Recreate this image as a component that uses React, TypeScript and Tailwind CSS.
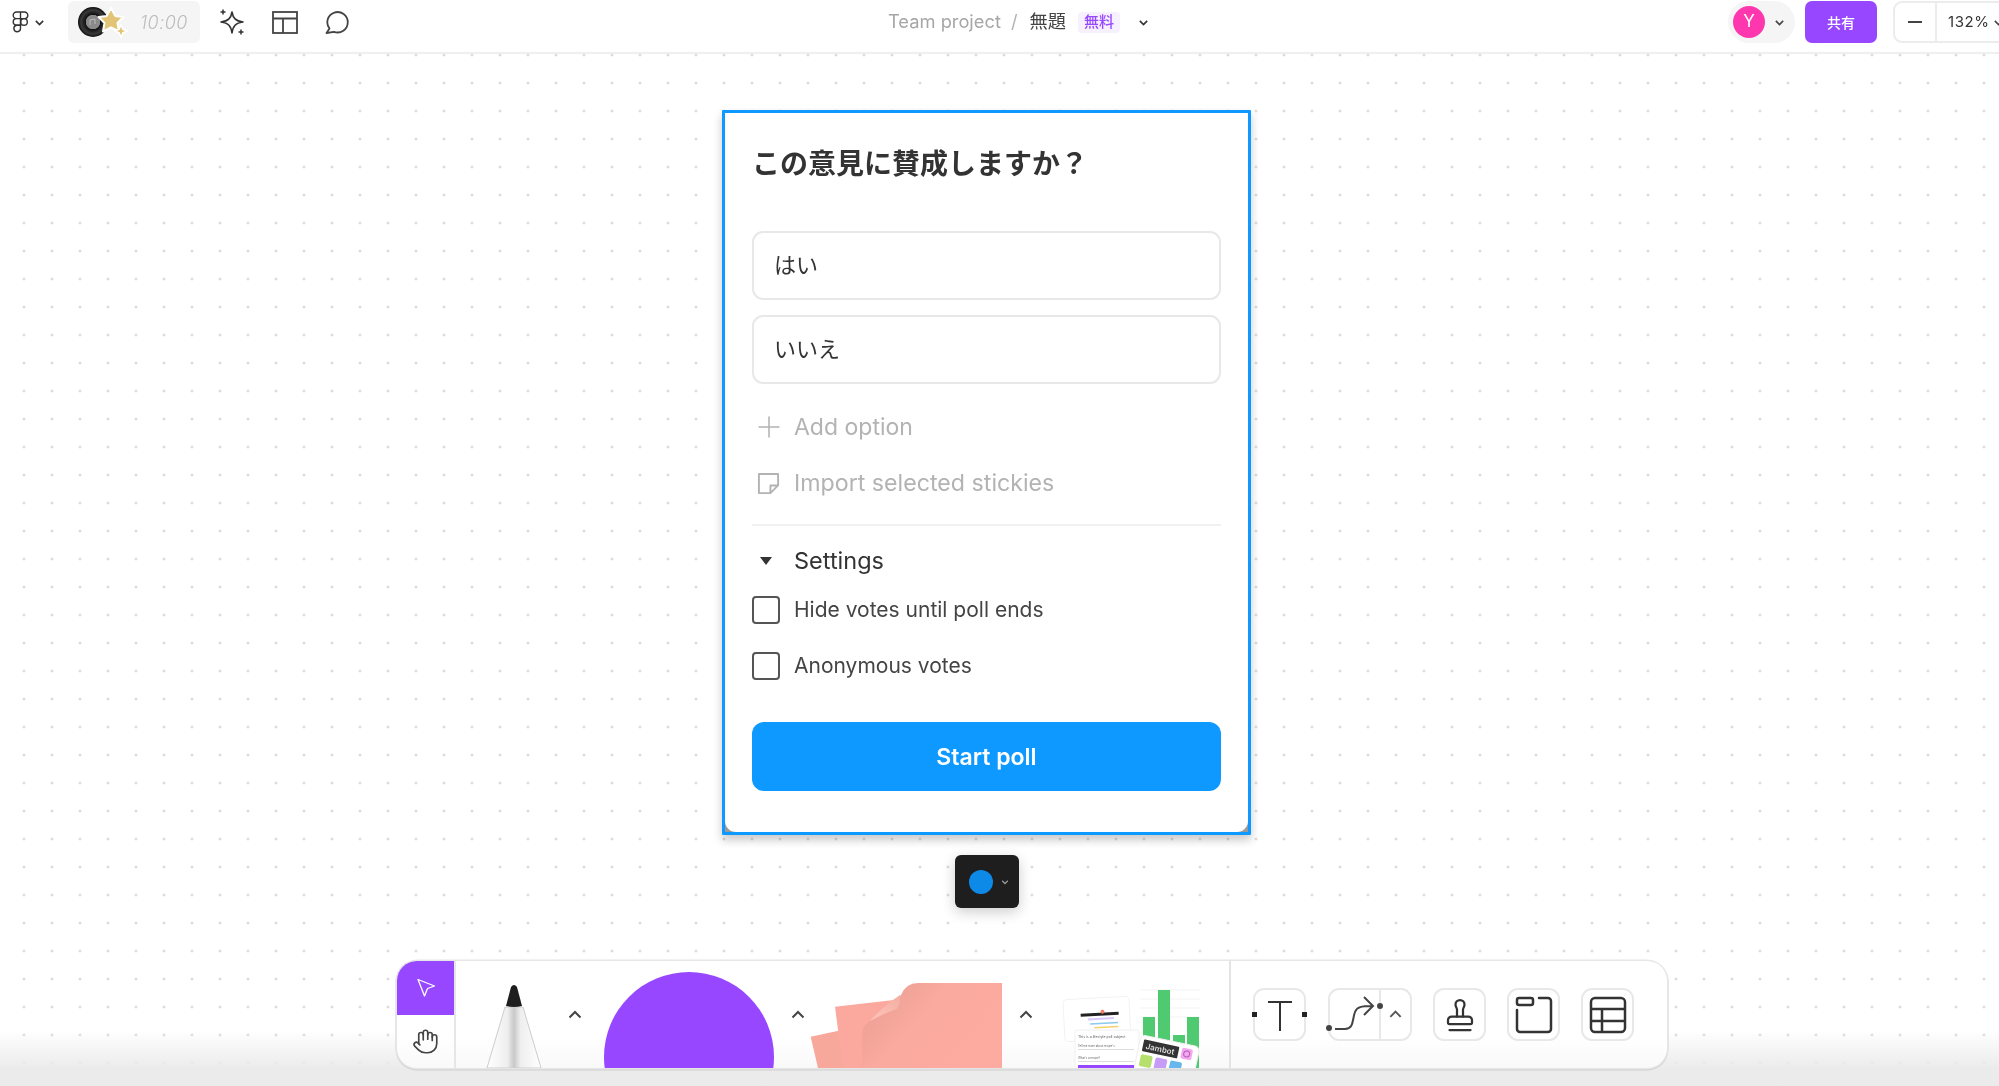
import { Hand, Plus, Stamp } from "lucide-react"

const FONT = "font-['Inter','Noto_Sans_CJK_JP',sans-serif]"

function Chevron({ up, className = "" }: { up?: boolean; className?: string }) {
  return (
    <svg viewBox="0 0 16 16" className={`fill-none stroke-current stroke-2 ${className}`}>
      <path d={up ? "M2.5 10.5 8 5l5.5 5.5" : "M3.5 6 8 10.5 12.5 6"} />
    </svg>
  )
}

function FigmaLogo() {
  return (
    <svg viewBox="0 0 17 22" className="h-[22px] w-[17px] fill-none stroke-[#333] stroke-[1.4]">
      <path d="M4.5 1h4v6.6h-4a3.3 3.3 0 0 1 0-6.6ZM8.5 1h4a3.3 3.3 0 0 1 0 6.6h-4ZM4.5 7.6h4v6.6h-4a3.3 3.3 0 0 1 0-6.6Z" />
      <circle cx="12" cy="10.9" r="3.3" />
      <path d="M4.5 14.2h4v3.3a3.3 3.3 0 1 1-4-3.3Z" />
    </svg>
  )
}

function TimerArt() {
  return (
    <svg viewBox="0 0 52 36" className="h-9 w-[52px]">
      <defs>
        <radialGradient id="disc">
          <stop offset="0.46" stopColor="#8a8a8a" />
          <stop offset="0.5" stopColor="#111" />
          <stop offset="0.8" stopColor="#3a3a3a" />
          <stop offset="1" stopColor="#0c0c0c" />
        </radialGradient>
      </defs>
      <circle cx="15" cy="18" r="15" fill="url(#disc)" />
      <path d="M12 21v-5l5-1v5" fill="none" stroke="#bbb" strokeWidth="1" />
      <path
        d="M33 4 37.200 11.900 45.400 13 39.500 19 41 27.500 33 23.500 25 27.500 26.500 19 20.600 13 28.800 11.900Z"
        fill="#e3c477"
        stroke="#fff"
        strokeWidth="2"
        strokeLinejoin="round"
      />
      <path d="M43 20.500l1.800 4.700 4.700 1.800-4.700 1.800-1.800 4.700-1.800-4.700-4.700-1.800 4.700-1.800Z" fill="#e3c477" stroke="#fff" strokeWidth="1.500" strokeLinejoin="round" />
    </svg>
  )
}

function Sparkles() {
  return (
    <svg viewBox="0 0 28 28" className="h-7 w-7 fill-none stroke-[#333] stroke-[1.6]">
      <path d="M14 4c1 6 3.5 9 11 10-7.500 1-10 4-11 11-1-7-3.500-10-11-11 7.500-1 10-4 11-10Z" strokeLinejoin="round" />
      <path d="M5 1.500v5M2.500 4h5M23 21.500v5M20.500 24h5" strokeWidth="1.500" />
    </svg>
  )
}

function LayoutIcon() {
  return (
    <svg viewBox="0 0 26 23" className="h-[23px] w-[26px] fill-none stroke-[#444] stroke-[1.8]">
      <rect x="1" y="1" width="24" height="21" />
      <path d="M1 7.500h24M11 7.500V22" />
    </svg>
  )
}

function CommentIcon() {
  return (
    <svg viewBox="0 0 25 23" className="h-[23px] w-[25px] fill-none stroke-[#444] stroke-[1.8]">
      <path d="M4.500 17.500A10.200 10.200 0 1 1 9 20.800L1.500 22Z" strokeLinejoin="round" />
    </svg>
  )
}

function TopBar() {
  return (
    <header className="flex h-[54px] shrink-0 items-center border-b-2 border-[#efefef] bg-white pb-[8px]">
      <div className="ml-3 flex items-center">
        <FigmaLogo />
        <Chevron className="ml-[4px] h-[13px] w-[13px] text-[#333]" />
      </div>
      <div className="ml-[22px] flex h-[42px] w-[132px] items-center rounded-[6px] bg-[#f5f5f5] pl-[10px]">
        <TimerArt />
        <span className="ml-[10px] text-[18px] font-light tracking-[0.5px] text-[#bdbdbd] italic">10:00</span>
      </div>
      <div className="ml-[18px] flex items-center">
        <Sparkles />
        <div className="ml-[26px]">
          <LayoutIcon />
        </div>
        <div className="ml-[27px]">
          <CommentIcon />
        </div>
      </div>
      <div className="ml-[538px] flex items-center text-[18.300px]">
        <span className="text-[#a6a6a6]">Team project</span>
        <span className="ml-[10px] text-[#b3b3b3]">/</span>
        <span className="ml-[12px] text-[#444]">無題</span>
        <span className="ml-[12px] flex h-[21px] w-[42px] items-center justify-center rounded-[4px] bg-[#f6f0ff] text-[15px] font-medium text-[#9747ff]">
          無料
        </span>
        <Chevron className="ml-[17px] h-[13px] w-[13px] text-[#333]" />
      </div>
      <div className="ml-[578px] flex h-[42px] w-[67px] items-center rounded-full bg-[#f5f5f5] pl-[5px]">
        <span className="flex size-8 items-center justify-center rounded-full bg-[#ff37ae] text-[17px] text-white">Y</span>
        <Chevron className="ml-[8px] h-[13px] w-[13px] text-[#444]" />
      </div>
      <button className="ml-[10px] h-[42px] w-[72px] rounded-[7px] bg-[#9747ff] text-[14px] font-medium text-white">
        共有
      </button>
      <div className="ml-[16px] flex h-[42px] flex-1 items-center overflow-hidden rounded-l-[9px] border-y-2 border-l-2 border-[#ececec]">
        <div className="flex h-full w-[42px] shrink-0 items-center justify-center border-r-2 border-[#ececec]">
          <span className="h-[2px] w-[14px] bg-[#444]" />
        </div>
        <span className="ml-[11px] shrink-0 text-[15px] tracking-[0.6px] text-[#333]">132%</span>
        <Chevron className="ml-[2px] h-[13px] w-[13px] shrink-0 text-[#444]" />
      </div>
    </header>
  )
}

function OptionInput({ label }: { label: string }) {
  return (
    <div className="flex h-[69px] items-center rounded-[11px] border-2 border-[#e8e8e8] pl-[20px] text-[22px] text-[#333]">
      {label}
    </div>
  )
}

function Check({ label, className = "" }: { label: string; className?: string }) {
  return (
    <div className={`flex h-7 items-center ${className}`}>
      <span className="size-7 rounded-[4px] border-2 border-[#555]" />
      <span className="ml-[14px] text-[21px] text-[#444]">{label}</span>
    </div>
  )
}

function PollCard() {
  return (
    <section className="ml-[722px] h-[725px] w-[529px] rounded-[1px] border-[3px] border-[#0d99ff] bg-gradient-to-b from-white via-white to-[#999] shadow-[0_5px_10px_rgba(0,0,0,0.22)]">
      <div className="h-full rounded-[11px] bg-white px-[27px]">
        <h1 className="pt-[33px] pb-[49px] text-[28px] leading-[36px] font-bold text-[#333]">この意見に賛成しますか？</h1>
        <div className="flex flex-col gap-[15px]">
          <OptionInput label="はい" />
          <OptionInput label="いいえ" />
        </div>
        <div className="mt-[26px] flex h-[34px] items-center text-[23px] text-[#b3b3b3]">
          <Plus className="size-[34px]" strokeWidth={1.100} />
          <span className="ml-[8px]">Add option</span>
        </div>
        <div className="mt-[22px] flex h-[34px] items-center text-[23.200px] text-[#b3b3b3]">
          <svg viewBox="0 0 24 24" className="ml-[5px] size-[23px] fill-none stroke-current stroke-2">
            <path d="M2 2h20v12l-8 8H2ZM22 14h-8v8" strokeLinejoin="round" />
          </svg>
          <span className="ml-[14px]">Import selected stickies</span>
        </div>
        <div className="mt-[24px] h-[2px] bg-[#f1f1f1]" />
        <div className="mt-[18px] flex h-[34px] items-center text-[23.500px] text-[#333]">
          <span className="ml-2 h-0 w-0 border-x-[6px] border-t-[8px] border-x-transparent border-t-[#333]" />
          <span className="ml-[22px]">Settings</span>
        </div>
        <Check label="Hide votes until poll ends" className="mt-[18px]" />
        <Check label="Anonymous votes" className="mt-[28px]" />
        <button className="mt-[42px] h-[69px] w-full rounded-[12px] bg-[#0d99ff] pt-[2px] text-[23px] font-semibold text-white">
          Start poll
        </button>
      </div>
    </section>
  )
}

function ColorSwatch() {
  return (
    <div className="mt-[20px] ml-[955px] flex h-[53px] w-[64px] items-center rounded-[6px] bg-[#1e1e1e] pl-[14px] shadow-[0_4px_14px_rgba(0,0,0,0.2)]">
      <span className="size-6 rounded-full bg-[#0d8ae8]" />
      <Chevron className="ml-[7px] h-[10px] w-[10px] text-[#999]" />
    </div>
  )
}

function Pen() {
  return (
    <svg viewBox="0 0 62 88" className="h-[88px] w-[62px] self-end">
      <defs>
        <linearGradient id="barrel" x1="0" x2="1" y1="0" y2="0">
          <stop offset="0" stopColor="#fff" />
          <stop offset="0.38" stopColor="#eee" />
          <stop offset="0.5" stopColor="#c8c8c8" />
          <stop offset="0.62" stopColor="#eee" />
          <stop offset="1" stopColor="#fff" />
        </linearGradient>
      </defs>
      <path d="M4 88 22 27h18l18 61Z" fill="url(#barrel)" stroke="#ccc" strokeWidth="1" />
      <path d="M23 26 28 7q3-4 6 0l5 19q-8 2-16 0Z" fill="#1e1e1e" />
    </svg>
  )
}

function Stickies() {
  return (
    <svg viewBox="0 0 192 85" className="h-[85px] w-[192px] self-end">
      <defs>
        <linearGradient id="sheet" x1="0" x2="1" y1="0" y2="0.55">
          <stop offset="0" stopColor="#e69c90" />
          <stop offset="0.5" stopColor="#fbaaa0" />
          <stop offset="1" stopColor="#fdaaa0" />
        </linearGradient>
        <linearGradient id="curl" x1="0" x2="1" y1="1" y2="0">
          <stop offset="0" stopColor="#ffc4ba" />
          <stop offset="1" stopColor="#f3aea2" />
        </linearGradient>
      </defs>
      <path d="M0.700 53.700 32 47 40 85H8Z" fill="#f8a79b" />
      <path d="M25 23.700 84 17 56 85H33Z" fill="#fba99e" />
      <path d="M52 85V52Q52 43 60 38L91 12Q96 0 108 0H192V85Z" fill="url(#sheet)" />
      <path d="M60 38Q72 24 90 12 91 20 87 26 75 30 60 38Z" fill="url(#curl)" />
    </svg>
  )
}

function WidgetsThumb() {
  return (
    <svg viewBox="0 0 145 85" className="h-[85px] w-[145px] self-end font-['Inter',sans-serif]">
      <g stroke="#eee" strokeWidth="0.7">
        <path d="M80 7h60M80 16h60M80 25h60M80 34h60" />
      </g>
      <rect x="83" y="34" width="12" height="51" fill="#4fca70" />
      <rect x="98" y="7" width="12" height="78" fill="#4fca70" />
      <rect x="113" y="52" width="12" height="33" fill="#4fca70" />
      <rect x="127" y="34" width="12" height="51" fill="#4fca70" />
      <g transform="rotate(-3 36 38)">
        <rect x="4" y="15" width="66" height="42" rx="4" fill="#fff" stroke="#f2f2f2" />
        <rect x="21" y="30" width="38" height="3" fill="#222" />
        <rect x="28" y="35" width="26" height="2" fill="#d7c8fa" />
        <rect x="30" y="40" width="28" height="1.500" fill="#8cc8f0" />
        <rect x="34" y="44" width="24" height="1.500" fill="#f5d26b" />
        <circle cx="43" cy="29" r="2" fill="#f47b5f" />
      </g>
      <rect x="15" y="47" width="64" height="38" rx="2" fill="#fff" stroke="#f0f0f0" />
      <text x="18" y="55" fontSize="3.500" fill="#555">This is a lifestyle poll subject</text>
      <text x="18" y="64" fontSize="2.800" fill="#666">Tell me more about recipe's</text>
      <rect x="18" y="66" width="56" height="1" fill="#ddd" />
      <text x="18" y="76" fontSize="2.800" fill="#666">What's a recipe?</text>
      <rect x="18" y="78" width="56" height="1" fill="#ddd" />
      <rect x="18" y="82" width="56" height="3" fill="#9747ff" />
      <g transform="rotate(12 110 70)">
        <rect x="78" y="58" width="60" height="36" rx="5" fill="#fff" stroke="#eee" />
        <rect x="82" y="62" width="36" height="12" rx="1" fill="#333" />
        <text x="85" y="71" fontSize="8" fontWeight="600" fill="#ddd">Jambot</text>
        <rect x="121" y="62" width="11" height="11" rx="2" fill="#f3a6f2" />
        <circle cx="126.500" cy="67.500" r="3" fill="none" stroke="#b45ab0" strokeWidth="1" />
        <rect x="82" y="77" width="12" height="12" rx="2" fill="#b5e06e" />
        <rect x="97" y="77" width="12" height="12" rx="2" fill="#c79cf7" />
        <rect x="112" y="77" width="12" height="12" rx="2" fill="#67b7ec" />
      </g>
    </svg>
  )
}

function ToolFrame({ children, className = "" }: { children: React.ReactNode; className?: string }) {
  return (
    <div className={`relative flex size-[53px] shrink-0 items-center justify-center rounded-[11px] border-2 border-[#e8e8e8] bg-white ${className}`}>
      {children}
    </div>
  )
}

function TextTool() {
  return (
    <ToolFrame className="ml-[22px]">
      <svg viewBox="0 0 26 32" className="h-8 w-[26px] fill-none stroke-[#333] stroke-2">
        <path d="M1 3h24M13 3v29" />
      </svg>
      <span className="absolute top-[22px] -left-[3px] size-[5px] bg-[#222]" />
      <span className="absolute top-[22px] -right-[3px] size-[5px] bg-[#222]" />
    </ToolFrame>
  )
}

function ConnectorTool() {
  return (
    <div className="relative ml-[22px] flex h-[53px] w-[84px] shrink-0 rounded-[11px] border-2 border-[#e8e8e8] bg-white">
      <div className="relative w-[51px] border-r-2 border-[#e8e8e8]">
        <svg viewBox="0 0 48 38" className="absolute top-[6px] left-[4px] h-[38px] w-[48px] fill-none stroke-[#444] stroke-2">
          <path d="M1 33h10c9 0 7-9 10-17 2-5 6-6 17-6M30 1l9 9-9 9" />
        </svg>
        <span className="absolute top-[35px] -left-[4px] size-[6px] rounded-full bg-[#444]" />
        <span className="absolute top-[13px] -right-[4px] size-[6px] rounded-full bg-[#444]" />
      </div>
      <div className="flex flex-1 items-center justify-center">
        <Chevron up className="h-[15px] w-[15px] text-[#555]" />
      </div>
    </div>
  )
}

function SectionIcon() {
  return (
    <svg viewBox="0 0 38 38" className="size-[38px] fill-none stroke-[#333] stroke-[2.5]">
      <path d="M24 2h9a3 3 0 0 1 3 3v28a3 3 0 0 1-3 3H5a3 3 0 0 1-3-3V14" strokeLinecap="round" />
      <rect x="2" y="2" width="16" height="7" rx="2" />
    </svg>
  )
}

function TableIcon() {
  return (
    <svg viewBox="0 0 38 38" className="size-[38px] fill-none stroke-[#333] stroke-[2.5]">
      <rect x="2" y="2" width="34" height="34" rx="4" />
      <path d="M2 13h34M2 25h34M13 13v23" />
    </svg>
  )
}

function Toolbar() {
  return (
    <div className="relative z-10 mt-[53px] ml-[397px] flex h-[107px] w-[1270px] items-center overflow-hidden rounded-[20px] bg-gradient-to-b from-white from-70% to-[#f9f9f9] shadow-[0_0_0_1.500px_#e6e6e6,0_1px_0_1.500px_#cfcfcf]">
      <div className="flex h-full w-[59px] shrink-0 flex-col border-r-2 border-[#e6e6e6]">
        <div className="flex h-[54px] items-center justify-center bg-[#9747ff]">
          <svg viewBox="0 0 20 20" className="size-5 fill-none stroke-white stroke-[1.300]">
            <path d="M2 1.500 18.500 8l-7 2.500L8.500 18Z" strokeLinejoin="round" />
          </svg>
        </div>
        <div className="flex flex-1 items-center justify-center">
          <Hand className="size-[27px] text-[#444]" strokeWidth={1.500} />
        </div>
      </div>
      <div className="ml-[27px] flex h-full items-end">
        <Pen />
      </div>
      <Chevron up className="ml-[22px] h-4 w-4 shrink-0 text-[#444]" />
      <div className="ml-[21px] flex h-[96px] w-[170px] shrink-0 self-end overflow-hidden">
        <div className="size-[170px] shrink-0 rounded-full bg-[#9747ff]" />
      </div>
      <Chevron up className="ml-[16px] h-4 w-4 shrink-0 text-[#444]" />
      <div className="ml-[4px] flex h-full items-end">
        <Stickies />
      </div>
      <Chevron up className="ml-[16px] h-4 w-4 shrink-0 text-[#444]" />
      <div className="ml-[26px] flex h-full items-end">
        <WidgetsThumb />
      </div>
      <div className="ml-[24px] h-full w-[2px] shrink-0 bg-[#e4e4e4]" />
      <TextTool />
      <ConnectorTool />
      <ToolFrame className="ml-[21px]">
        <Stamp className="size-[36px] text-[#333]" strokeWidth={1.500} />
      </ToolFrame>
      <ToolFrame className="ml-[21px]">
        <SectionIcon />
      </ToolFrame>
      <ToolFrame className="ml-[21px]">
        <TableIcon />
      </ToolFrame>
    </div>
  )
}

export default function App() {
  return (
    <div className={`flex h-[1086px] w-[1999px] flex-col overflow-hidden bg-white blur-[0.4px] ${FONT}`}>
      <TopBar />
      <main className="relative flex-1 bg-[radial-gradient(circle,#dcdcdc_1.300px,transparent_1.700px)] bg-[size:28px_28px] bg-[position:10px_-13px] pt-[56px]">
        <PollCard />
        <ColorSwatch />
        <Toolbar />
        <div className="pointer-events-none absolute inset-x-0 bottom-0 h-[56px] bg-gradient-to-b from-transparent to-[#ebebeb] to-70%" />
      </main>
    </div>
  )
}
